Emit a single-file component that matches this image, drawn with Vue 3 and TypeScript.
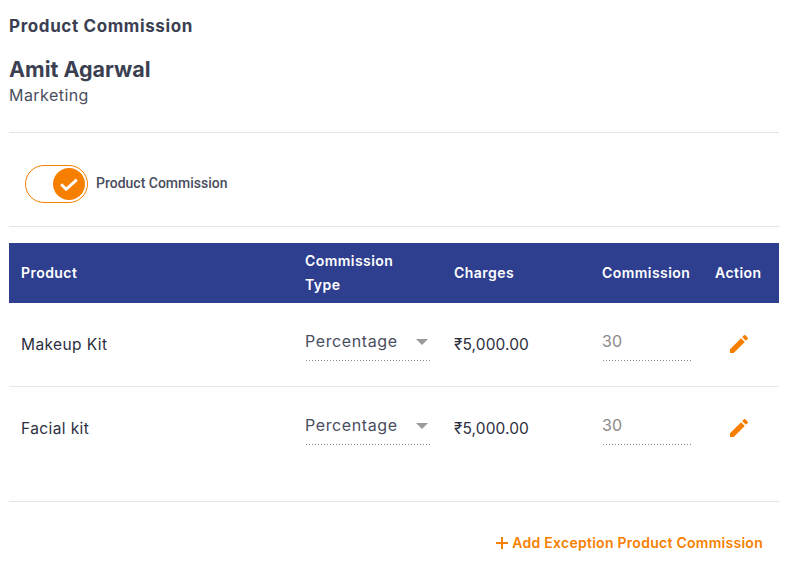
<script setup lang="ts">
interface Row { name: string; type: string; charges: string; commission: string }
const rows: Row[] = [
  { name: 'Makeup Kit', type: 'Percentage', charges: '₹5,000.00', commission: '30' },
  { name: 'Facial kit', type: 'Percentage', charges: '₹5,000.00', commission: '30' },
]
</script>

<template>
  <div class="page">
    <h1 class="title">Product Commission</h1>
    <div class="person">
      <div class="name">Amit Agarwal</div>
      <div class="dept">Marketing</div>
    </div>
    <div class="toggle-row">
      <div class="toggle">
        <span class="knob">
          <svg width="20" height="20" viewBox="0 0 20 20"><path d="M2.2 10.2l5 5L17.8 5.6" fill="none" stroke="#fff" stroke-width="2.8" /></svg>
        </span>
      </div>
      <span class="toggle-label">Product Commission</span>
    </div>
    <div class="table">
      <div class="grid head">
        <div class="h-product">Product</div>
        <div class="h-type">Commission<br />Type</div>
        <div>Charges</div>
        <div>Commission</div>
        <div>Action</div>
      </div>
      <div v-for="(r, i) in rows" :key="r.name" class="grid row" :class="{ last: i === rows.length - 1 }">
        <div class="cell-name">{{ r.name }}</div>
        <div class="field select">
          <span>{{ r.type }}</span>
          <i class="caret"></i>
        </div>
        <div class="charges">{{ r.charges }}</div>
        <div class="field num">{{ r.commission }}</div>
        <div class="action">
          <svg width="24" height="24" viewBox="0 0 24 24"><path fill="#f77f00" d="M3 17.25V21h3.75L17.81 9.94l-3.75-3.75L3 17.25zM20.71 7.04a1 1 0 0 0 0-1.41l-2.34-2.34a1 1 0 0 0-1.41 0l-1.83 1.83 3.75 3.75 1.83-1.83z" /></svg>
        </div>
      </div>
    </div>
    <div class="footer">
      <a class="add">
        <svg width="14" height="14" viewBox="0 0 14 14"><path d="M7 1v12M1 7h12" stroke="#f77f00" stroke-width="2" fill="none" /></svg>
        <span>Add Exception Product Commission</span>
      </a>
    </div>
  </div>
</template>

<style>
html, body { margin: 0; background: #fff; }
</style>

<style scoped>
.page {
  width: 770px;
  height: 577px;
  margin-left: 9px;
  font-family: Inter, "Open Sans", sans-serif;
  color: #3b3f51;
  overflow: hidden;
}
.title {
  margin: 0;
  padding-top: 16px;
  font-size: 17px;
  line-height: 20px;
  font-weight: 700;
  letter-spacing: 0.62px;
}
.person {
  padding-top: 21px;
  height: 75px;
  box-sizing: content-box;
  border-bottom: 1px solid #e4e4e6;
}
.name { font-size: 21.5px; line-height: 24px; font-weight: 700; }
.dept { font-size: 16px; line-height: 28px; font-weight: 400; color: #4a4e60; letter-spacing: 0.45px; }
.toggle-row {
  box-sizing: border-box;
  display: flex;
  align-items: center;
  gap: 8px;
  height: 94px;
  padding: 9px 0 0 16px;
  border-bottom: 1px solid #e4e4e6;
}
.toggle {
  box-sizing: border-box;
  width: 63px;
  height: 38px;
  border: 1px solid #f77f00;
  border-radius: 19px;
  display: flex;
  align-items: center;
  justify-content: flex-end;
  padding-right: 2px;
}
.knob {
  width: 32px;
  height: 32px;
  border-radius: 50%;
  background: #f77f00;
  display: flex;
  align-items: center;
  justify-content: center;
}
.toggle-label { font-family: Roboto, sans-serif; font-size: 14px; font-weight: 500; color: #4a4e60; padding-bottom: 2px; }
.table { margin-top: 16px; height: 258px; border-bottom: 1px solid #e4e4e6; }
.grid {
  display: grid;
  grid-template-columns: 296px 149px 148px 113px 64px;
  align-items: center;
}
.head {
  height: 60px;
  background: #2f3f8f;
  color: #fff;
  font-size: 14px;
  font-weight: 600;
  line-height: 24px;
  letter-spacing: 0.45px;
}
.h-product { padding-left: 12px; }
.row {
  height: 83px;
  border-bottom: 1px solid #e8e8ea;
  font-size: 16px;
}
.row.last { border-bottom: none; }
.cell-name { padding-left: 12px; font-size: 15.5px; color: #2c2f40; letter-spacing: 0.4px; }
.field {
  position: relative;
  height: 36px;
  line-height: 32px;
  top: -2px;
  box-sizing: border-box;
  background-image: radial-gradient(circle, #8a8a8a 0.6px, transparent 0.7px);
  background-size: 3px 1px;
  background-repeat: repeat-x;
  background-position: left bottom;
  color: #4a4e60;
}
.select {
  width: 126px;
  display: flex;
  justify-content: space-between;
  align-items: flex-start;
  font-size: 16px;
  letter-spacing: 0.6px;
}
.caret {
  margin: 14px 3px 0 0;
  border-left: 6px solid transparent;
  border-right: 6px solid transparent;
  border-top: 6px solid #9a9a9a;
}
.charges { font-size: 15.5px; color: #2c2f40; letter-spacing: 0.1px; }
.num { width: 90px; color: #8a8a8a; font-size: 16px; }
.action { display: flex; padding-left: 12px; position: relative; top: -1px; }
.footer { display: flex; justify-content: flex-end; padding: 31px 16px 0 0; }
.add {
  display: flex;
  align-items: center;
  gap: 3px;
  color: #f77f00;
  font-size: 14px;
  font-weight: 600;
  line-height: 20px;
  letter-spacing: 0.27px;
}
</style>
